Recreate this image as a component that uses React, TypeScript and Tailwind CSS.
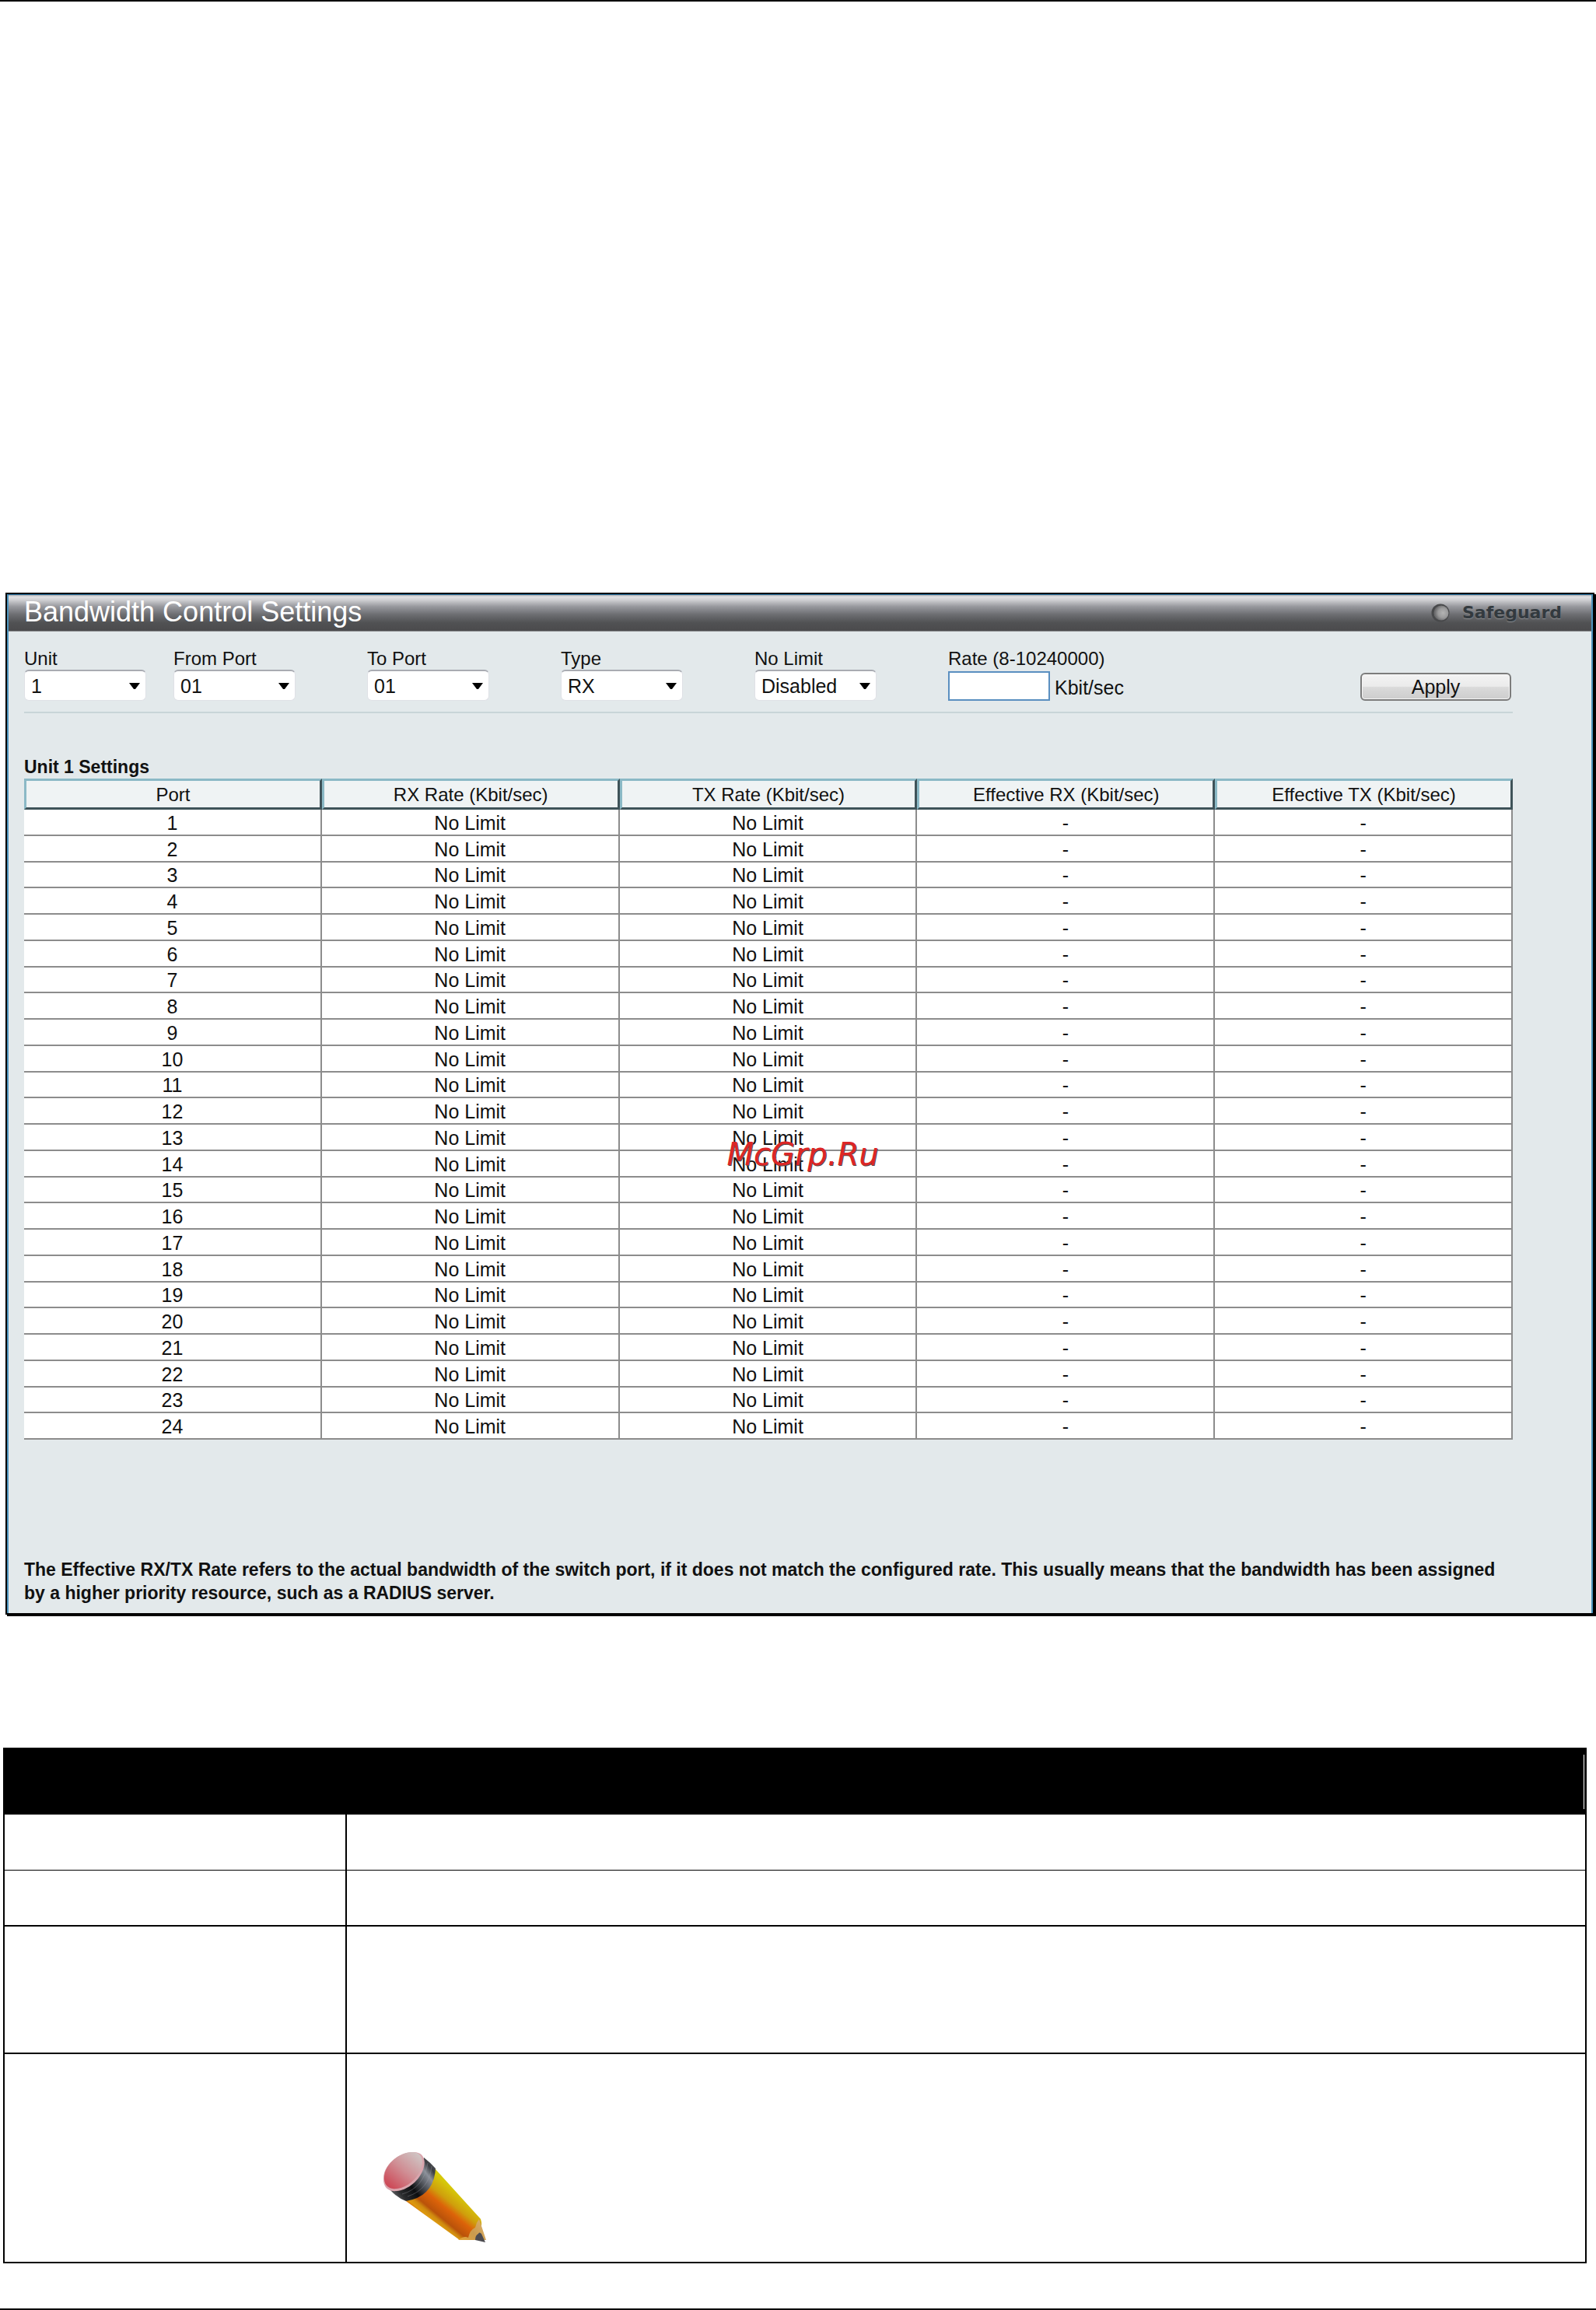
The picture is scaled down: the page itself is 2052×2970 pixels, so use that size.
import React from 'react';

type SelectFieldProps = { id: string; label: string; value: string };

function SelectField({ id, label, value }: SelectFieldProps) {
  return (
    <div>
      <label htmlFor={id} className="block leading-[29px]">
        {label}
      </label>
      <div className="relative w-[157px]">
        <select
          id={id}
          defaultValue={value}
          className="block h-10 w-full appearance-none rounded-md border border-t-2 border-[#dfe1e6] border-t-[#a9abb2] bg-white pl-2 text-[25px] leading-9 text-[#111]"
        >
          <option>{value}</option>
        </select>
        <svg
          className="pointer-events-none absolute top-[17px] right-2 h-2 w-3.5"
          viewBox="0 0 14 8"
          aria-hidden="true"
        >
          <path d="M0 0H14L8 8H6Z" fill="#000" />
        </svg>
      </div>
    </div>
  );
}

function Pencil() {
  return (
    <svg className="block h-[126px] w-[140px]" viewBox="0 0 140 126" aria-label="Note" role="img">
      <defs>
        <linearGradient id="body" x1="62" y1="102" x2="100" y2="56" gradientUnits="userSpaceOnUse">
          <stop offset="0" stopColor="#e87b0c" />
          <stop offset="0.12" stopColor="#d35c08" />
          <stop offset="0.2" stopColor="#de9a0e" />
          <stop offset="0.28" stopColor="#cf8a10" />
          <stop offset="0.36" stopColor="#b9520a" />
          <stop offset="0.58" stopColor="#dc6309" />
          <stop offset="0.74" stopColor="#cf9f0c" />
          <stop offset="1" stopColor="#d6c80a" />
        </linearGradient>
        <linearGradient id="ferrule" x1="12" y1="62" x2="68" y2="18" gradientUnits="userSpaceOnUse">
          <stop offset="0" stopColor="#77797c" />
          <stop offset="0.2" stopColor="#2a2b2d" />
          <stop offset="0.42" stopColor="#0d0e10" />
          <stop offset="0.62" stopColor="#54585f" />
          <stop offset="0.78" stopColor="#8b9099" />
          <stop offset="0.9" stopColor="#3b3d41" />
          <stop offset="1" stopColor="#4f5154" />
        </linearGradient>
        <linearGradient id="eraser" x1="10" y1="46" x2="46" y2="4" gradientUnits="userSpaceOnUse">
          <stop offset="0" stopColor="#cd4a58" />
          <stop offset="0.5" stopColor="#d08e94" />
          <stop offset="1" stopColor="#cfc4c3" />
        </linearGradient>
        <linearGradient id="wood" x1="106" y1="116" x2="130" y2="98" gradientUnits="userSpaceOnUse">
          <stop offset="0" stopColor="#e0a33a" />
          <stop offset="0.5" stopColor="#c99a4e" />
          <stop offset="1" stopColor="#d7aa62" />
        </linearGradient>
      </defs>
      <path d="M30 64L67 22L126 87Q130 100 120 104Q112 106 110 114L99 114Z" fill="url(#body)" />
      <path d="M97 114Q105 108 110 111Q112 101 119 98Q120 92 124 87L133 114Z" fill="url(#wood)" />
      <path d="M119 114Q119 108 123 106Q124 103 127 106L132 117Z" fill="#4c4b50" />
      <path d="M10 50Q38 52 53 8Q62 15 68 22Q66 58 30 64Q19 60 10 50Z" fill="url(#ferrule)" />
      <path d="M25 55Q53 47 58 15M32 58Q60 49 63 19" fill="none" stroke="#a0a4ac" strokeOpacity="0.35" strokeWidth="1" />
      <path d="M1 36C0 20 18 2 38 1C50 0 56 8 53 20C48 40 27 53 13 51C5 50 1 44 1 36Z" fill="#d9a5ad" />
      <path d="M2 35C1 20 18 2 37 1C48 1 53 8 50 20C45 38 26 50 13 48C6 47 2 42 2 35Z" fill="url(#eraser)" />
    </svg>
  );
}

const ports = Array.from({ length: 24 }, (_, i) => i + 1);
const columns = [
  'Port',
  'RX Rate (Kbit/sec)',
  'TX Rate (Kbit/sec)',
  'Effective RX (Kbit/sec)',
  'Effective TX (Kbit/sec)',
];

const cell = 'border-r-2 border-b-2 border-[#8c8c8c] px-0 pt-0.5 pb-0 text-center';

export default function App() {
  return (
    <div className="relative flex min-h-screen flex-col border-y-2 border-black bg-white font-['Liberation_Sans',Arial,sans-serif] text-2xl text-[#111]">
      <main className="grow pt-[760px]">
        <section className="mr-0.5 ml-[7px] border-2 border-black bg-[#e3e9eb] shadow-[2px_2px_0_#000]">
          <div className="border-x-2 border-t border-x-[#4d94be] border-t-[#2a75a5]">
            <header className="flex h-[47px] items-center justify-between border-b border-[#8a8b8d] bg-[linear-gradient(#a9a9ac_0%,#e2e2e4_5%,#cfcfd2_14%,#98999e_32%,#6c6d71_55%,#505153_78%,#4b4b4d_100%)] pr-[38px] pl-5">
              <h1 className="pb-0.5 text-[36px] leading-10 text-white">Bandwidth Control Settings</h1>
              <div className="flex items-center gap-4">
                <svg className="size-6" viewBox="0 0 24 24" aria-hidden="true">
                  <defs>
                    <radialGradient id="led" cx="0.62" cy="0.5" r="0.55">
                      <stop offset="0" stopColor="#b4b4b4" />
                      <stop offset="0.6" stopColor="#9a9a9b" />
                      <stop offset="1" stopColor="#6c6c6e" />
                    </radialGradient>
                  </defs>
                  <circle cx="12" cy="12" r="11.5" fill="#48494b" />
                  <circle cx="13" cy="12" r="9.5" fill="url(#led)" />
                </svg>
                <span className="font-['DejaVu_Sans',sans-serif] text-[22px] leading-6 font-bold text-[#333a3f] [text-shadow:0_1px_1px_#8b8d90]">
                  Safeguard
                </span>
              </div>
            </header>

            <div className="pt-5 pr-[101px] pb-[11px] pl-5">
              <form
                className="grid grid-cols-[192px_repeat(4,249px)_1fr_auto] border-b-2 border-[#c8d5d8] pb-3.5"
                onSubmit={(e) => e.preventDefault()}
              >
                <SelectField id="unit" label="Unit" value="1" />
                <SelectField id="from" label="From Port" value="01" />
                <SelectField id="to" label="To Port" value="01" />
                <SelectField id="type" label="Type" value="RX" />
                <SelectField id="limit" label="No Limit" value="Disabled" />
                <div>
                  <label htmlFor="rate" className="block leading-[29px]">
                    Rate (8-10240000)
                  </label>
                  <div className="flex items-center gap-1.5 pt-0.5">
                    <input
                      id="rate"
                      type="text"
                      className="h-[38px] w-[131px] border-2 border-[#5a8fc0] bg-white px-1"
                    />
                    <span className="pt-1 text-[25px] leading-7">Kbit/sec</span>
                  </div>
                </div>
                <button
                  type="submit"
                  className="mr-0.5 h-9 w-[194px] self-end rounded-md border-2 border-[#7c7c7c] bg-[linear-gradient(#f3f3f3_0%,#ebebeb_48%,#dadada_52%,#cdcdcd_100%)] text-[25px] leading-7 shadow-[inset_0_0_0_1px_#f6f6f6]"
                >
                  Apply
                </button>
              </form>

              <h2 className="mt-[55px] text-[23px] leading-[29px] font-bold">Unit 1 Settings</h2>
              <table className="h-[850px] w-full table-fixed border-separate border-spacing-0 bg-white">
                <thead>
                  <tr>
                    {columns.map((name) => (
                      <th
                        key={name}
                        scope="col"
                        className="h-10 border-3 border-t-[#8bb9c6] border-r-[#3f5359] border-b-[#3f5359] border-l-[#8bb9c6] bg-[#eff3f4] px-0 pt-0.5 pb-0 leading-7 font-normal"
                      >
                        {name}
                      </th>
                    ))}
                  </tr>
                </thead>
                <tbody className="text-[25px] leading-7">
                  {ports.map((port) => (
                    <tr key={port}>
                      <td className={cell}>{port}</td>
                      <td className={cell}>No Limit</td>
                      <td className={cell}>No Limit</td>
                      <td className={cell}>-</td>
                      <td className={cell}>-</td>
                    </tr>
                  ))}
                </tbody>
              </table>

              <p className="mt-[152px] text-[23px] leading-[30px] font-bold">
                The Effective RX/TX Rate refers to the actual bandwidth of the switch port, if it does not match the
                configured rate. This usually means that the bandwidth has been assigned
                <br />
                by a higher priority resource, such as a RADIUS server.
              </p>
            </div>
          </div>
        </section>

        <table className="mt-[171px] ml-1 w-[calc(100%-16px)] border-collapse border-2 border-black">
          <thead>
            <tr>
              <th colSpan={2} className="h-[85px] bg-black py-1.5 pr-px pl-0">
                <div className="ml-auto h-[70px] w-px bg-white" />
              </th>
            </tr>
          </thead>
          <tbody>
            <tr className="h-[71px] border-b border-black">
              <td className="w-[440px] border-r-2 border-black" />
              <td />
            </tr>
            <tr className="h-[72px] border-b-2 border-black">
              <td className="border-r-2 border-black" />
              <td />
            </tr>
            <tr className="h-[164px] border-b-2 border-black">
              <td className="border-r-2 border-black" />
              <td />
            </tr>
            <tr className="h-[269px]">
              <td className="border-r-2 border-black" />
              <td className="pb-4 pl-[46px] align-bottom">
                <Pencil />
              </td>
            </tr>
          </tbody>
        </table>
      </main>

      <div className="pointer-events-none absolute inset-0 flex items-center justify-center pl-3 font-['DejaVu_Sans',sans-serif] text-[40px] text-[#dc2626] italic [text-shadow:1px_1px_0_#5a4a4a]">
        McGrp.Ru
      </div>
    </div>
  );
}
